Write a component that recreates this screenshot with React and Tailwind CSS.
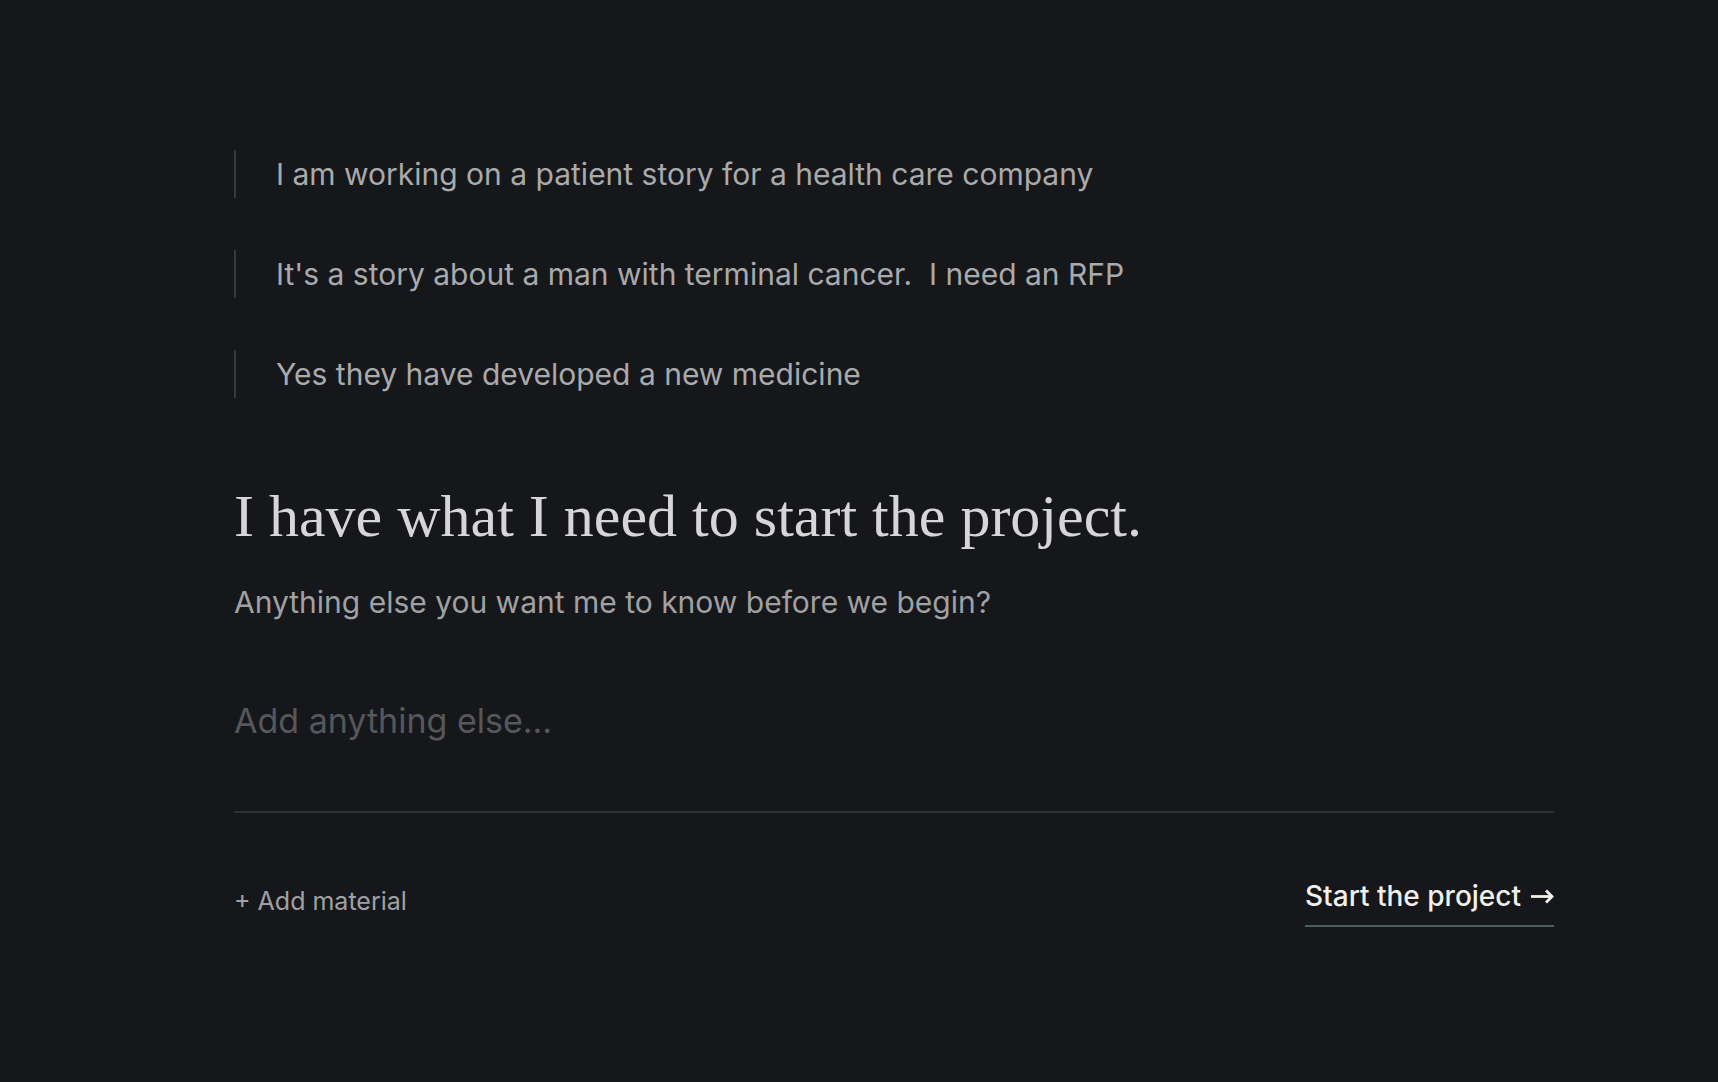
import React from "react";

const notes = [
  "I am working on a patient story for a health care company",
  "It's a story about a man with terminal cancer.\u00a0 I need an RFP",
  "Yes they have developed a new medicine",
];

function ArrowRight() {
  return (
    <svg width="24" height="16" viewBox="0 0 24 16" fill="none" className="ml-[9px] inline-block">
      <path d="M1 8.5H22" stroke="currentColor" strokeWidth="2.8" />
      <path d="M16 2.5L22 8.5L16 14.5" stroke="currentColor" strokeWidth="2.8" strokeLinejoin="miter" />
    </svg>
  );
}

export default function App() {
  return (
    <div
      className="min-h-[1082px] w-full bg-[#16171b] pl-[234px] pr-[164px] pt-[150px]"
      style={{ fontFamily: "Inter, 'Noto Sans', sans-serif" }}
    >
      <div className="flex flex-col gap-[52px]">
        {notes.map((n) => (
          <div
            key={n}
            className="flex h-[48px] items-center border-l-2 border-[#2d3e3e] pl-[40px] text-[30px] text-[#a9aaac]"
          >
            {n}
          </div>
        ))}
      </div>

      <h1
        className="mt-[82px] text-[60px] leading-[1.2] text-[#d6d6d6]"
        style={{ fontFamily: "'Liberation Serif', 'DejaVu Serif', serif" }}
      >
        I have what I need to start the project.
      </h1>
      <p className="mt-[28px] text-[30px] leading-[1.5] text-[#a0a1a3]">
        Anything else you want me to know before we begin?
      </p>

      <div className="mt-[70px] border-b-2 border-[#2e3034] pb-[65px] text-[34px] leading-[1.5] text-[#55575b]">
        Add anything else...
      </div>

      <div className="mt-[62px] flex items-start justify-between">
        <button className="mt-[8px] text-[25px] leading-[1.5] text-[#a0a1a3]">+ Add material</button>
        <button className="flex items-center border-b-2 border-[#4a5f5c] pb-[8px] text-[28px] font-medium leading-[1.5] text-[#f1efea]">
          <span>Start the project</span>
          <ArrowRight />
        </button>
      </div>
    </div>
  );
}
